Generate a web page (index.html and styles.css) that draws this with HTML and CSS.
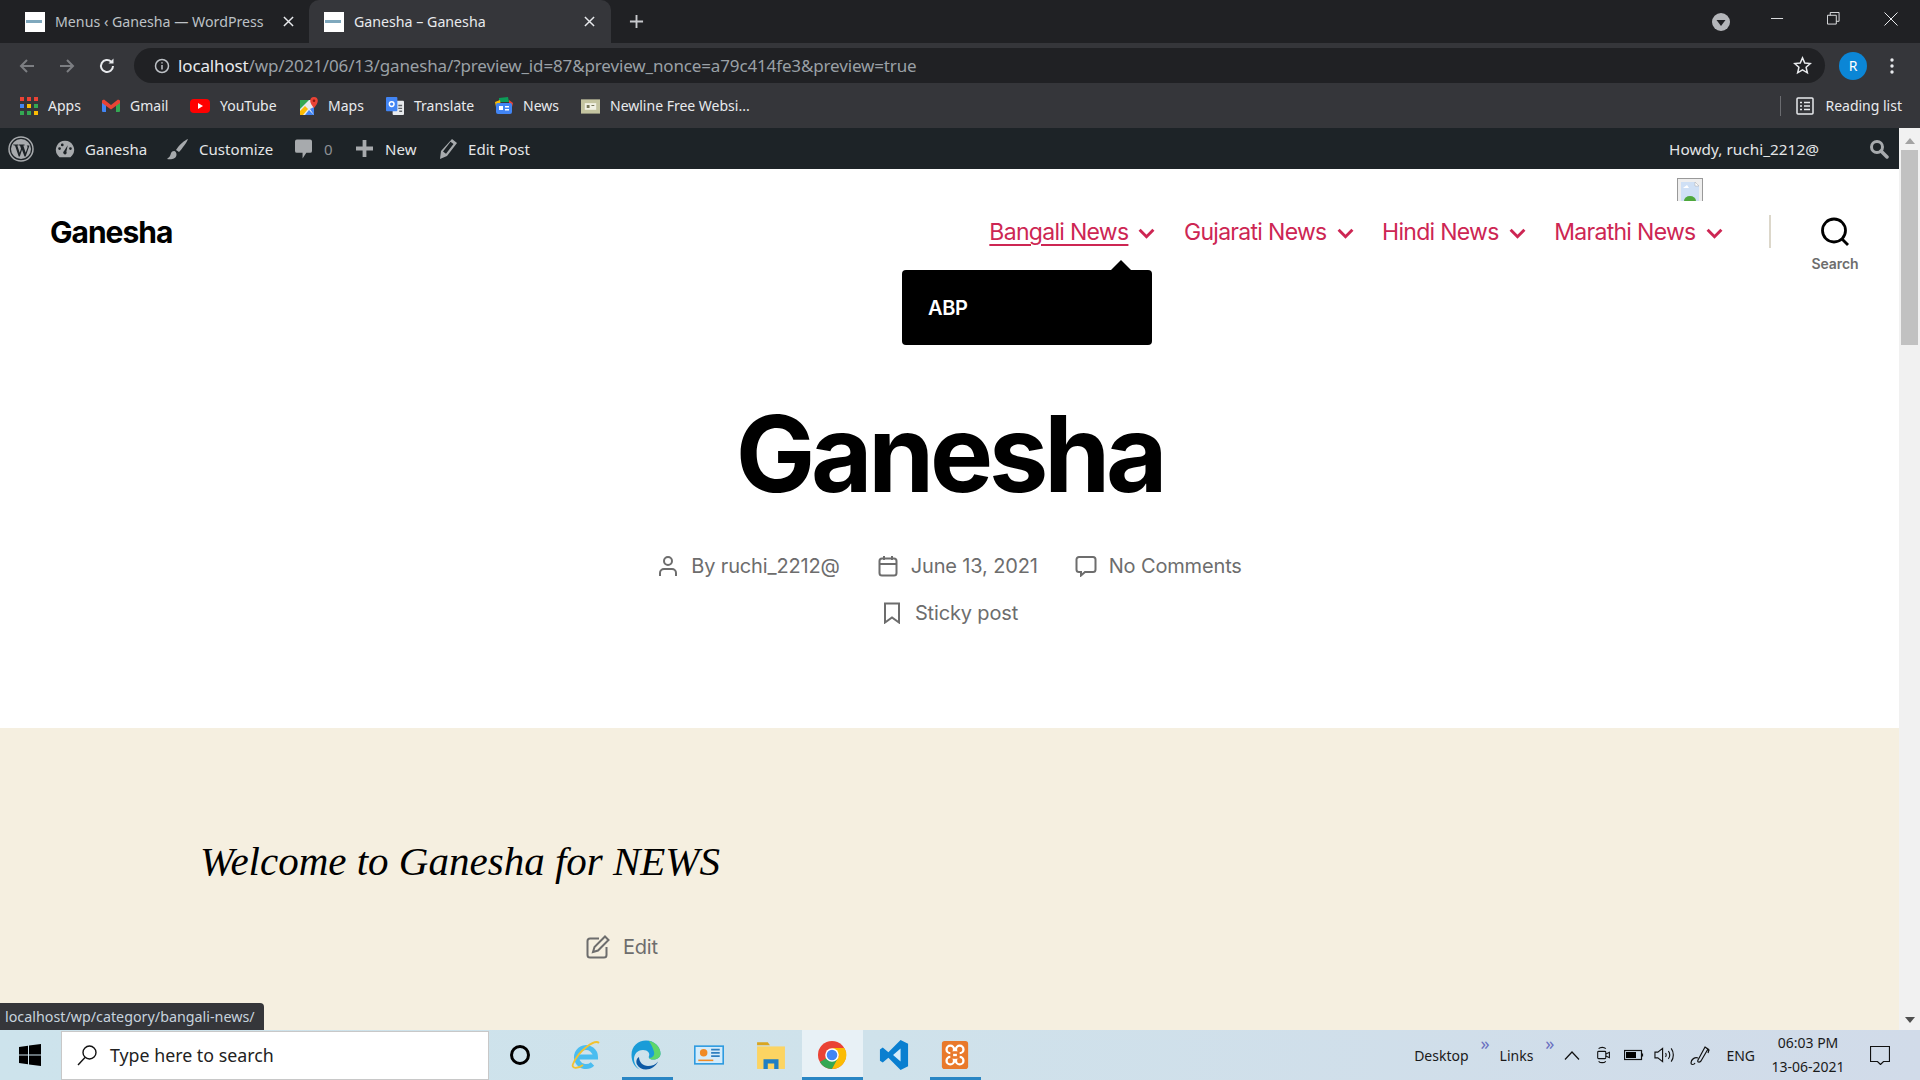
FILE: index.html
```html
<!DOCTYPE html>
<html lang="en">
<head>
  <meta charset="UTF-8" />
  <title>Ganesha – Ganesha</title>
  <link rel="stylesheet" href="styles.css">
</head>
<body>
  <!-- tab strip -->
  <div class="tabstrip">
    <div class="tab">
      <span class="favicon"><i></i></span>
      <span class="tab-title">Menus ‹ Ganesha — WordPress</span>
      <svg class="tab-x" viewBox="0 0 12 12"><path d="M1 1l10 10M11 1L1 11"/></svg>
    </div>
    <div class="tab active">
      <span class="favicon"><i></i></span>
      <span class="tab-title">Ganesha – Ganesha</span>
      <svg class="tab-x" viewBox="0 0 12 12"><path d="M1 1l10 10M11 1L1 11"/></svg>
    </div>
    <svg class="tab-plus" viewBox="0 0 16 16"><path d="M8 1v14M1 8h14"/></svg>
    <div class="window-btns">
      <svg class="tab-search" viewBox="0 0 18 18"><circle cx="9" cy="9" r="9" fill="#b4b6ba"/><path d="M4.500 7h9L9 13z" fill="#202124"/></svg>
      <svg class="win-min" viewBox="0 0 14 14"><path d="M0 7h13"/></svg>
      <svg class="win-max" viewBox="0 0 14 14"><path d="M.5 3.500h9.500v9.500H.5zM3.500 3.500V.5H13v9.500h-3"/></svg>
      <svg class="win-close" viewBox="0 0 14 14"><path d="M.5.5l13 13M13.500.5l-13 13"/></svg>
    </div>
  </div>

  <!-- address bar -->
  <div class="toolbar">
    <svg class="nav-btn dim" viewBox="0 0 18 18"><path d="M16 9H3M9 3L3 9l6 6"/></svg>
    <svg class="nav-btn dim" viewBox="0 0 18 18"><path d="M2 9h13M9 3l6 6-6 6"/></svg>
    <svg class="nav-btn" viewBox="0 0 18 18"><path d="M15 9a6 6 0 1 1-1.800-4.300"/><path class="solid" d="M15.500 1.500v5h-5z"/></svg>
    <div class="omnibox">
      <svg class="info" viewBox="0 0 16 16"><circle cx="8" cy="8" r="6.500"/><path d="M8 7v4.500M8 4.200v1.400"/></svg>
      <span class="url"><b>localhost</b>/wp/2021/06/13/ganesha/?preview_id=87&amp;preview_nonce=a79c414fe3&amp;preview=true</span>
      <svg class="star" viewBox="0 0 20 20"><path d="M10 2l2.400 5.400 5.800.6-4.400 3.900 1.300 5.800L10 14.700l-5.100 3 1.300-5.800L1.800 8l5.800-.6z"/></svg>
    </div>
    <span class="avatar">R</span>
    <svg class="dots" viewBox="0 0 4 16"><circle cx="2" cy="2" r="1.700"/><circle cx="2" cy="8" r="1.700"/><circle cx="2" cy="14" r="1.700"/></svg>
  </div>

  <!-- bookmarks -->
  <div class="bookmarks">
    <a class="bm bm-apps">
      <svg viewBox="0 0 18 18"><g fill="#ea4335"><rect width="4" height="4"/><rect x="7" width="4" height="4"/><rect x="14" width="4" height="4"/></g><g fill="#fbbc04"><rect y="7" width="4" height="4" fill="#4285f4"/><rect x="7" y="7" width="4" height="4"/><rect x="14" y="7" width="4" height="4" fill="#34a853"/></g><g fill="#34a853"><rect y="14" width="4" height="4"/><rect x="7" y="14" width="4" height="4"/><rect x="14" y="14" width="4" height="4" fill="#fbbc04"/></g></svg>
      Apps
    </a>
    <a class="bm bm-gmail">
      <svg viewBox="0 0 18 18"><path fill="#4285f4" d="M0 4h4v11H1a1 1 0 0 1-1-1z"/><path fill="#34a853" d="M14 4h4v10a1 1 0 0 1-1 1h-3z"/><path fill="#ea4335" d="M0 3.500L2 2.500 9 8l7-5.500 2 1V6L9 12.500 0 6z"/></svg>
      Gmail
    </a>
    <a class="bm bm-yt">
      <svg viewBox="0 0 20 18"><rect y="2" width="20" height="14" rx="4" fill="#f00"/><path d="M8 6l5 3-5 3z" fill="#fff"/></svg>
      YouTube
    </a>
    <a class="bm bm-maps">
      <svg viewBox="0 0 18 18"><path fill="#e8eaed" d="M0 3h14v15H0z"/><path fill="#34a853" d="M0 3h9L0 12z"/><path fill="#fbbc04" d="M0 14l5-5 3 3-5 6H0z"/><path fill="#4285f4" d="M9 13l5 5H5zM14 10v8l-4-6z"/><path fill="#ea4335" d="M14 0a3.800 3.800 0 0 1 3.800 3.800C17.800 7 14 11 14 11s-3.800-4-3.800-7.200A3.800 3.800 0 0 1 14 0z"/><circle cx="14" cy="3.800" r="1.300" fill="#8b1a10"/></svg>
      Maps
    </a>
    <a class="bm bm-trans">
      <svg viewBox="0 0 19 19"><rect x="7" y="4" width="12" height="15" rx="1" fill="#e8eaed"/><rect width="12" height="15" rx="1" fill="#4285f4"/><circle cx="6" cy="7.500" r="2.500" fill="none" stroke="#fff" stroke-width="1.500"/><path d="M13 9h4M13 12h4M14 15h3" stroke="#5f6368" stroke-width="1.500"/></svg>
      Translate
    </a>
    <a class="bm bm-news">
      <svg viewBox="0 0 18 18"><path fill="#0c9d58" d="M4 1l9-1 1 5H4z"/><path fill="#ea4335" d="M14 3l4 3-1 4h-3z"/><path fill="#fbbc04" d="M0 5l5-2 1 7H1z"/><rect x="1" y="6" width="16" height="11" rx="2" fill="#4285f4"/><path fill="#fff" d="M4 9h4v4H4zM10 9h4v1.500h-4zM10 12h4v1.500h-4z"/></svg>
      News
    </a>
    <a class="bm bm-newline">
      <svg viewBox="0 0 20 18"><rect y="2" width="20" height="15" fill="#c4c4a0"/><rect x="4" y="6" width="12" height="7" fill="#f1f1e4"/><path d="M6 8h3v3H6zM11 8h3v1h-3z" fill="#77775a"/></svg>
      Newline Free Websi...
    </a>
    <span class="bm-divider"></span>
    <a class="bm reading">
      <svg viewBox="0 0 18 18"><rect x="1" y="1" width="16" height="16" rx="1" fill="none" stroke="#e8eaed" stroke-width="1.500"/><path d="M4 5.500h2M8 5.500h6M4 9h2M8 9h6M4 12.500h2M8 12.500h6" stroke="#e8eaed" stroke-width="1.500"/></svg>
      Reading list
    </a>
  </div>

  <div class="viewport">
    <div class="main">
      <!-- wp admin bar -->
      <div class="adminbar">
        <svg class="ab-wp" viewBox="0 0 26 26"><circle cx="13" cy="13" r="12" fill="none" stroke="#a7aaad" stroke-width="1.500"/><circle cx="13" cy="13" r="10" fill="#a7aaad"/><path fill="#1d2327" d="M5 8.500h5.500v1H9.300l2.400 7.200 1.300-4-1-3.200h-1v-1h5.500v1h-1.200l2.400 7.200 1.700-5c.4-1.200-.2-1.800-.9-2.200h3l-3.900 11h-1.100L14 13.800 11.800 20.500h-1.100L7 9.500H5.800z"/></svg>
        <a class="ab-item ab-site">
          <svg viewBox="0 0 22 20"><path fill="#a7aaad" d="M11 1a10 10 0 0 0-8 16l2 2h12l2-2a10 10 0 0 0-8-16zM5 11a1.500 1.500 0 1 1 0-3 1.500 1.500 0 0 1 0 3zm3-4a1.500 1.500 0 1 1 0-3 1.500 1.500 0 0 1 0 3zm3 9a2 2 0 0 1-1-3.700L14 6l-1.500 7A2 2 0 0 1 11 16zm6-5a1.500 1.500 0 1 1 0-3 1.500 1.500 0 0 1 0 3z"/></svg>
          Ganesha
        </a>
        <a class="ab-item ab-custom">
          <svg viewBox="0 0 22 22"><path fill="#a7aaad" d="M21 1c-3 1-9 6-12 11l3 2c3-3 8-10 9-13zM7 13c-3 0-3 3-4 5-.5 1-2 2-3 3 4 1 9 0 9.500-4 .2-2-1-4-2.500-4z"/></svg>
          Customize
        </a>
        <a class="ab-item ab-comments">
          <svg viewBox="0 0 18 22"><path fill="#a7aaad" d="M2 1h14a2 2 0 0 1 2 2v10a2 2 0 0 1-2 2h-4l-4 6v-6H2a2 2 0 0 1-2-2V3a2 2 0 0 1 2-2z"/></svg>
          <span class="dim-text">0</span>
        </a>
        <a class="ab-item ab-new">
          <svg viewBox="0 0 18 18"><path fill="#a7aaad" d="M7 0h4v7h7v4h-7v7H7v-7H0V7h7z"/></svg>
          New
        </a>
        <a class="ab-item ab-edit">
          <svg viewBox="0 0 18 20"><path fill="#a7aaad" d="M13 0l5 4-10 13-7 3 1-8zM4 12.500l3 2.300L14.500 5l-3-2.300z"/></svg>
          Edit Post
        </a>
        <span class="howdy">Howdy, ruchi_2212@</span>
        <svg class="ab-search" viewBox="0 0 20 20"><circle cx="8" cy="8" r="5.500" fill="none" stroke="#a7aaad" stroke-width="3"/><path d="M12 12l6 6" stroke="#a7aaad" stroke-width="3.500" stroke-linecap="round"/></svg>
      </div>

      <div class="page">
        <header class="site-header">
          <div class="site-title">Ganesha</div>
          <nav class="menu">
            <a class="menu-item current">Bangali News</a>
            <svg class="chev" viewBox="0 0 16 10"><path d="M1.500 1.500L8 8l6.500-6.500"/></svg>
            <a class="menu-item">Gujarati News</a>
            <svg class="chev" viewBox="0 0 16 10"><path d="M1.500 1.500L8 8l6.500-6.500"/></svg>
            <a class="menu-item">Hindi News</a>
            <svg class="chev" viewBox="0 0 16 10"><path d="M1.500 1.500L8 8l6.500-6.500"/></svg>
            <a class="menu-item">Marathi News</a>
            <svg class="chev" viewBox="0 0 16 10"><path d="M1.500 1.500L8 8l6.500-6.500"/></svg>
          </nav>
          <span class="head-divider"></span>
          <div class="search-toggle">
            <svg viewBox="0 0 30 30"><circle cx="14" cy="13.500" r="11.500"/><path d="M22 22l6 6"/></svg>
            <span>Search</span>
          </div>
        </header>

        <!-- submenu and broken image float over the header -->
        <div class="submenu"><span>ABP</span></div>
        <div class="broken-img">
          <svg viewBox="0 0 26 23"><rect x=".5" y=".5" width="25" height="30" fill="#eee" stroke="#999"/><path d="M4 4h14l4 4v15H4z" fill="#cfe0f5"/><path d="M18 4l4 4h-4z" fill="#fff" stroke="#aaa" stroke-width=".5"/><path d="M6 10h6l-2-3z" fill="#fff"/><ellipse cx="13" cy="23" rx="6" ry="5" fill="#4ea83c"/></svg>
        </div>

        <section class="entry-head">
          <h1>Ganesha</h1>
          <div class="meta">
            <span class="meta-item">
              <svg viewBox="0 0 20 22"><circle cx="10" cy="6" r="4"/><path d="M2 21v-3a4 4 0 0 1 4-4h8a4 4 0 0 1 4 4v3"/></svg>
              By ruchi_2212@
            </span>
            <span class="meta-item">
              <svg viewBox="0 0 20 22"><rect x="1.500" y="3.500" width="17" height="17" rx="2.500"/><path d="M1.500 9h17M6 1v4M14 1v4"/></svg>
              June 13, 2021
            </span>
            <span class="meta-item">
              <svg viewBox="0 0 22 22"><path d="M4 2h14a2.500 2.500 0 0 1 2.500 2.500v10A2.500 2.500 0 0 1 18 17h-8l-4 3.500V17H4a2.500 2.500 0 0 1-2.500-2.500v-10A2.500 2.500 0 0 1 4 2z"/></svg>
              No Comments
            </span>
          </div>
          <div class="meta meta-sticky">
            <span class="meta-item">
              <svg viewBox="0 0 18 22"><path d="M2 1.500h14v19l-7-5-7 5z"/></svg>
              Sticky post
            </span>
          </div>
        </section>

        <section class="content">
          <p class="welcome">Welcome to Ganesha for NEWS</p>
          <div class="edit-link">
            <svg viewBox="0 0 24 24"><path d="M13 3.500H4A2.500 2.500 0 0 0 1.500 6v14A2.500 2.500 0 0 0 4 22.500h14a2.500 2.500 0 0 0 2.500-2.500v-8"/><path d="M19 1.500l3.500 3.500L12 15.500l-5 1.500 1.500-5z"/></svg>
            Edit
          </div>
        </section>

        <div class="status-bubble">localhost/wp/category/bangali-news/</div>
      </div>
    </div>

    <div class="scrollbar">
      <svg viewBox="0 0 10 6"><path d="M5 0l5 6H0z" fill="#a3a3a3"/></svg>
      <div class="thumb"></div>
      <svg class="down" viewBox="0 0 10 6"><path d="M0 0h10L5 6z" fill="#505050"/></svg>
    </div>
  </div>

  <!-- windows taskbar -->
  <div class="taskbar">
    <svg class="start" viewBox="0 0 22 22"><path fill="#000" d="M0 3l9-1.300V10.500H0zM10 1.500L22 0v10.500H10zM0 11.500h9v8.800L0 19zM10 11.500h12V22l-12-1.600z"/></svg>
    <div class="searchbox">
      <svg viewBox="0 0 22 22"><circle cx="13.500" cy="8.500" r="6.500"/><path d="M9 13.500L2 21"/></svg>
      <span>Type here to search</span>
    </div>
    <div class="apps">
      <span class="app app-cortana"><svg viewBox="0 0 22 22"><circle cx="11" cy="11" r="8.500" fill="none" stroke="#000" stroke-width="3"/></svg></span>
      <span class="app"><svg viewBox="0 0 30 30"><path d="M6 17h18.500a9.500 9.500 0 1 0-3 7" fill="none" stroke="#4bbdf0" stroke-width="5"/><path d="M28 3C24-1 8 10 2 24c-2 5 5 5 10 1" fill="none" stroke="#f2c230" stroke-width="1.800"/></svg></span>
      <span class="app on app-edge"><svg viewBox="0 0 30 30"><path fill="#1a9cd8" d="M.5 15C.5 6 7 .5 15 .5c8.500 0 14.500 6.500 14.500 13 0 4-3.500 6-7.500 6-3 0-5-1.500-4-3.500 1-2.500-1-6-6-6-6 0-9 4.500-9 9 0 4 2 8.500 6 10.500C4 28 .5 22 .5 15z"/><path fill="#5fd66a" d="M18 1c6 1 11.500 6 11.500 12.500 0 4-3.500 6-7.500 6-2 0-3.500-.7-4-1.800 3 .5 6-2 5-6C22 8 20 4 18 1z"/><path fill="#0c59a4" d="M8 17c0 5 4 9 9 9 4 0 8-1.500 10-4.500-2 4.500-7 8-12 8-4 0-7-1.500-9-5-1-2-1-6 2-7.500z"/></svg></span>
      <span class="app"><svg viewBox="0 0 28 26"><rect y="4" width="28" height="18" fill="#2e9be0"/><rect x="1.500" y="5.500" width="25" height="15" fill="#d4ecfb"/><circle cx="9" cy="11" r="3.500" fill="#f08a24"/><path d="M16 8h8M16 11h8M16 14h8" stroke="#2e7fc0" stroke-width="1.500"/><path d="M4 18h14" stroke="#f08a24" stroke-width="1.500"/></svg></span>
      <span class="app"><svg viewBox="0 0 28 28"><path d="M1 2h10l2 3H1z" fill="#d9a520"/><rect x="1" y="6" width="26" height="21" fill="#fcd462"/><path d="M7 27v-9h14v9h-4v-5h-6v5z" fill="#1f7fc4"/></svg></span>
      <span class="app on active"><svg viewBox="0 0 30 30"><circle cx="15" cy="15" r="14" fill="#ea4335"/><path d="M15 15L2.900 22A14 14 0 0 0 15 29l7-11z" fill="#34a853"/><path d="M15 8h12.400A14 14 0 0 1 15 29l7-13z" fill="#fbbc04"/><circle cx="15" cy="15" r="6.800" fill="#fff"/><circle cx="15" cy="15" r="5.300" fill="#4285f4"/></svg></span>
      <span class="app"><svg viewBox="0 0 30 32"><path d="M22 0l8 4v24l-8 4L9 19l-6 5-3-2v-12l3-2 6 5z" fill="#0a7fd0"/><path d="M22 9l-8 7 8 7z" fill="#d6edfb"/></svg></span>
      <span class="app on"><svg viewBox="0 0 30 32"><rect x="1" y="1" width="28" height="30" rx="3" fill="#e9792b"/><g fill="#e9792b" stroke="#fff" stroke-width="2.500"><circle cx="10" cy="10" r="4"/><circle cx="20" cy="10" r="4"/><circle cx="10" cy="22" r="4"/><circle cx="20" cy="22" r="4"/></g><path d="M10 12h10v8H10z" fill="#e9792b"/><path d="M13 16h4" stroke="#fff" stroke-width="2.500"/></svg></span>
    </div>
    <div class="tray">
      <span class="tray-link desktop">Desktop<i>»</i></span>
      <span class="tray-link links">Links<i>»</i></span>
      <svg class="tray-caret" viewBox="0 0 16 9"><path d="M1 8.500L8 1l7 7.500"/></svg>
      <svg class="tray-meet" viewBox="0 0 16 20"><rect x="1" y="6" width="9" height="8" rx="1"/><path d="M10 9l4-2v6l-4-2M2 3c2-2 6-2 8 0M2 17c2 2 6 2 8 0"/></svg>
      <svg class="tray-batt" viewBox="0 0 20 12"><rect x=".5" y="1.500" width="17" height="9"/><rect x="2" y="3" width="10" height="6" fill="#000" stroke="none"/><path d="M18.500 4.500v3"/></svg>
      <svg class="tray-vol" viewBox="0 0 22 18"><path d="M1 6h3l5-4v14l-5-4H1zM12 7c1 1 1 3 0 4M15 5c2 2 2 6 0 8M18 2c3 4 3 10 0 14"/></svg>
      <svg class="tray-pen" viewBox="0 0 22 22"><path d="M9 16l7-13 3 2-7 12c-2 2-4 1-3-1zM16 3l4 3-1 3M9 14c-3-1-7 1-7 5 0 2 3 2 4 0"/></svg>
      <span class="tray-lang">ENG</span>
      <div class="clock"><span>06:03 PM</span><span>13-06-2021</span></div>
      <svg class="tray-note" viewBox="0 0 20 19"><path d="M.5.500h19v15h-6l-3 3-3-3h-7z"/></svg>
    </div>
  </div>
</body>
</html>
```

FILE: styles.css
```css
* { box-sizing: border-box; }
html, body { margin: 0; height: 100%; overflow: hidden; }
body { width: 1920px; height: 1080px; display: flex; flex-direction: column; font-family: "Inter", sans-serif; background: #fff; }
svg { display: block; flex: none; }

/* browser chrome */
.tabstrip { height: 43px; background: #202124; display: flex; align-items: flex-end; color: #bdc1c6; font: 14.5px "Noto Sans", sans-serif; flex: none; }
.tab { width: 310px; height: 43px; display: flex; align-items: center; padding-left: 25px; }
.tab.active { width: 302px; margin-left: -1px; padding-left: 15px; background: #35363a; color: #e8eaed; border-radius: 10px 10px 0 0; }
.favicon { width: 20px; height: 20px; background: #fff; display: flex; align-items: center; padding-left: 1px; margin-right: 10px; flex: none; }
.favicon i { width: 16px; height: 3px; background: #7fa8bd; }
.tab-title { width: 219px; white-space: nowrap; font-size: 14.2px; }
.tab.active .tab-title { width: 224px; }
.tab-x { width: 11px; height: 11px; margin-left: 9px; fill: none; stroke: #e8eaed; stroke-width: 1.6; }
.tab.active .tab-x { margin-left: 6px; }
.tab-plus { width: 15px; height: 15px; margin: 0 0 14px 18px; fill: none; stroke: #c8cacd; stroke-width: 2; }
.window-btns { margin-left: auto; height: 43px; display: flex; align-items: flex-start; fill: none; stroke: #e8eaed; }
.tab-search { width: 18px; height: 18px; margin: 13px 41px 0 0; stroke: none; }
.win-min { width: 13px; height: 13px; margin: 12px 43px 0 0; }
.win-max { width: 13px; height: 13px; margin: 12px 44px 0 0; }
.win-close { width: 14px; height: 14px; margin: 12px 22px 0 0; }

.toolbar { height: 42px; background: #35363a; display: flex; align-items: center; padding: 3px 0 0 18px; flex: none; }
.nav-btn { width: 18px; height: 18px; margin-right: 22px; fill: none; stroke: #e8eaed; stroke-width: 2; }
.nav-btn.dim { stroke: #7c7e82; }
.nav-btn .solid { fill: #e8eaed; stroke: none; }
.omnibox { width: 1691px; height: 35px; margin-left: -4px; background: #202124; border-radius: 18px; display: flex; align-items: center; padding-left: 20px; }
.info { width: 16px; height: 16px; fill: none; stroke: #bdc1c6; stroke-width: 1.5; }
.url { margin-left: 8px; font: 17px "Noto Sans", sans-serif; color: #9aa0a6; letter-spacing: -.14px; white-space: nowrap; }
.url b { font-weight: 400; color: #e8eaed; }
.star { width: 19px; height: 19px; margin-left: auto; margin-right: 13px; fill: none; stroke: #e8eaed; stroke-width: 1.6; }
.avatar { width: 28px; height: 28px; margin-left: 14px; border-radius: 50%; background: #0b86d6; color: #fff; font: 14px "Noto Sans", sans-serif; display: flex; align-items: center; justify-content: center; }
.dots { width: 4px; height: 16px; margin-left: 23px; fill: #e8eaed; }

.bookmarks { height: 43px; padding-bottom: 2px; background: #35363a; display: flex; align-items: center; color: #e8eaed; font: 14px "Noto Sans", sans-serif; flex: none; white-space: nowrap; }
.bm { display: flex; align-items: center; gap: 10px; }
.bm svg { width: 18px; height: 18px; }
.bm-apps { margin-left: 20px; width: 82px; }
.bm-gmail { width: 88px; }
.bm-yt { width: 110px; }
.bm-yt svg { width: 20px; }
.bm-maps { width: 86px; }
.bm-trans { width: 109px; }
.bm-news { width: 86px; }
.bm-newline { width: 200px; }
.bm-newline svg { width: 19px; }
.bm-divider { width: 1px; height: 20px; background: #6b6c70; margin-left: auto; }
.reading { margin: 0 18px 0 15px; gap: 11px; }

/* page column and scrollbar sit side by side under the bookmarks bar */
.viewport { flex: 1; display: flex; min-height: 0; }
.main { flex: 1; min-width: 0; display: flex; flex-direction: column; }

.adminbar { height: 41px; background: #1d2327; color: #e4e6e7; display: flex; align-items: center; font: 15px "Noto Sans", sans-serif; letter-spacing: .05px; flex: none; white-space: nowrap; }
.ab-wp { width: 26px; height: 26px; margin: 0 21px 0 8px; }
.ab-item { display: flex; align-items: center; gap: 10px; }
.ab-item svg { height: 20px; width: 20px; }
.ab-site { width: 112px; }
.ab-custom { width: 128px; }
.ab-custom svg { width: 22px; height: 22px; }
.ab-comments { width: 61px; gap: 12px; }
.ab-comments svg { width: 17px; height: 22px; }
.ab-new { width: 83px; gap: 12px; }
.ab-new svg { width: 17px; height: 17px; }
.ab-edit { gap: 11px; }
.ab-edit svg { width: 18px; height: 20px; }
.dim-text { color: #8c8f94; }
.howdy { margin-left: auto; margin-right: 50px; font-size: 15.3px; }
.ab-search { width: 20px; height: 20px; margin-right: 10px; }

/* page */
.page { flex: 1; position: relative; display: flex; flex-direction: column; overflow: hidden; background: #fff; }
.site-header { height: 126px; display: flex; align-items: flex-start; padding: 46px 0 0 50px; }
.site-title { font-size: 30px; font-weight: 700; letter-spacing: -1px; color: #000; line-height: 34px; }
.menu { margin-left: auto; display: flex; align-items: center; height: 34px; }
.menu-item { font-size: 23px; color: #cd2653; letter-spacing: -.7px; line-height: 34px; white-space: nowrap; }
.menu-item.current { text-decoration: underline; text-decoration-thickness: 2px; text-underline-offset: 4px; }
.chev { width: 17px; height: 11px; margin: 2px 28.500px 0 10px; fill: none; stroke: #cd2653; stroke-width: 2.8; }
.head-divider { width: 2px; height: 33px; margin: 0 0 0 18px; background: #dcd7ca; }
.search-toggle { width: 128px; display: flex; flex-direction: column; align-items: center; font-size: 14px; font-weight: 600; color: #6d6d6d; letter-spacing: -.1px; }
.search-toggle svg { width: 30px; height: 30px; margin-top: 2px; fill: none; stroke: #000; stroke-width: 2.8; }
.search-toggle span { margin-top: 8px; }
.submenu { position: absolute; left: 902px; top: 101px; width: 250px; height: 75px; background: #000; border-radius: 4px; color: #fff; font-size: 20px; font-weight: 600; letter-spacing: -.4px; padding: 25px 0 0 26px; line-height: 27px; }
.submenu::before { content: ""; position: absolute; right: 21px; top: -10px; border: 10px solid transparent; border-top: 0; border-bottom-color: #000; }
.broken-img { position: absolute; left: 1677px; top: 9px; width: 26px; height: 23px; }
.broken-img svg { width: 26px; height: 23px; }

.entry-head { height: 433px; text-align: center; color: #6d6d6d; }
.entry-head h1 { margin: 0; padding-top: 106px; font-size: 106px; font-weight: 700; line-height: 1; letter-spacing: -4.200px; color: #000; }
.meta { display: flex; justify-content: center; gap: 37px; font-size: 20px; letter-spacing: -.15px; line-height: 48px; }
.entry-head h1 + .meta { margin-top: 35px; }
.meta-sticky { margin-top: -1px; }
.meta-item { display: flex; align-items: center; gap: 12px; }
.meta-item svg { width: 22px; height: 22px; fill: none; stroke: #6d6d6d; stroke-width: 2; }

.content { flex: 1; background: #f5efe0; padding: 106px 0 0 200px; }
.welcome { margin: 0; font: italic 41px/54px "Liberation Serif", serif; color: #000; }
.edit-link { margin: 47px 0 0 386px; display: flex; align-items: center; gap: 13px; font-size: 20px; color: #6d6d6d; letter-spacing: -.2px; }
.edit-link svg { width: 24px; height: 24px; fill: none; stroke: #6d6d6d; stroke-width: 2; }

.status-bubble { position: absolute; left: 0; bottom: 0; height: 27px; padding: 0 9px 0 5px; background: #35363a; border-radius: 0 4px 0 0; color: #c7d3de; font: 14.3px/27px "Noto Sans", sans-serif; white-space: nowrap; }

.scrollbar { width: 21px; background: #f1f1f1; display: flex; flex-direction: column; align-items: center; padding-top: 10px; flex: none; }
.scrollbar svg { width: 10px; height: 6px; }
.thumb { width: 17px; height: 195px; margin-top: 6px; background: #c1c1c1; }
.scrollbar .down { margin-top: auto; margin-bottom: 7px; }

/* taskbar */
.taskbar { height: 50px; flex: none; display: flex; align-items: center; background: linear-gradient(90deg, #cde3ec 0%, #cfe2eb 45%, #d1dbe9 100%); color: #1a1a1a; font: 14px "Noto Sans", sans-serif; white-space: nowrap; }
.start { width: 22px; height: 22px; margin: 0 20px 0 19px; }
.searchbox { width: 428px; height: 49px; background: #fff; border: 1px solid #c8c8c8; display: flex; align-items: center; padding-left: 14px; font-size: 17.8px; color: #222; }
.searchbox svg { width: 22px; height: 22px; fill: none; stroke: #111; stroke-width: 1.4; }
.searchbox span { margin-left: 12px; }
.apps { display: flex; margin-left: 5px; height: 50px; }
.app { width: 61.5px; height: 50px; display: flex; align-items: center; justify-content: center; }
.app svg { width: 30px; height: 30px; }
.app-cortana svg { width: 22px; height: 22px; margin-right: 10px; }
.app-edge svg { margin-right: 4px; }
.app.on { background: linear-gradient(#2a86c4, #2a86c4) center bottom / 51px 3px no-repeat; }
.app.active { background: linear-gradient(#2a86c4, #2a86c4) center bottom / 100% 3px no-repeat, #e8f1f6; }
.tray { margin-left: auto; display: flex; align-items: center; height: 50px; position: relative; }
.tray-link { position: relative; }
.tray-link i { position: absolute; right: -21px; top: -15px; font: 18px "Noto Sans", sans-serif; color: #6a70c0; }
.desktop { margin-right: 31px; }
.links { margin-right: 31px; }
.tray svg { fill: none; stroke: #111; stroke-width: 1.2; }
.tray-caret { width: 16px; height: 9px; margin-right: 16px; }
.tray-meet { width: 16px; height: 18px; margin-right: 12px; }
.tray-batt { width: 20px; height: 12px; margin-right: 10px; }
.tray-vol { width: 21px; height: 18px; margin-right: 14px; }
.tray-pen { width: 22px; height: 22px; margin-right: 15px; }
.tray-lang { margin-right: 15px; }
.clock { display: flex; flex-direction: column; align-items: center; line-height: 24px; margin-right: 24px; width: 76px; }
.tray-note { width: 20px; height: 19px; margin-right: 30px; }
```
